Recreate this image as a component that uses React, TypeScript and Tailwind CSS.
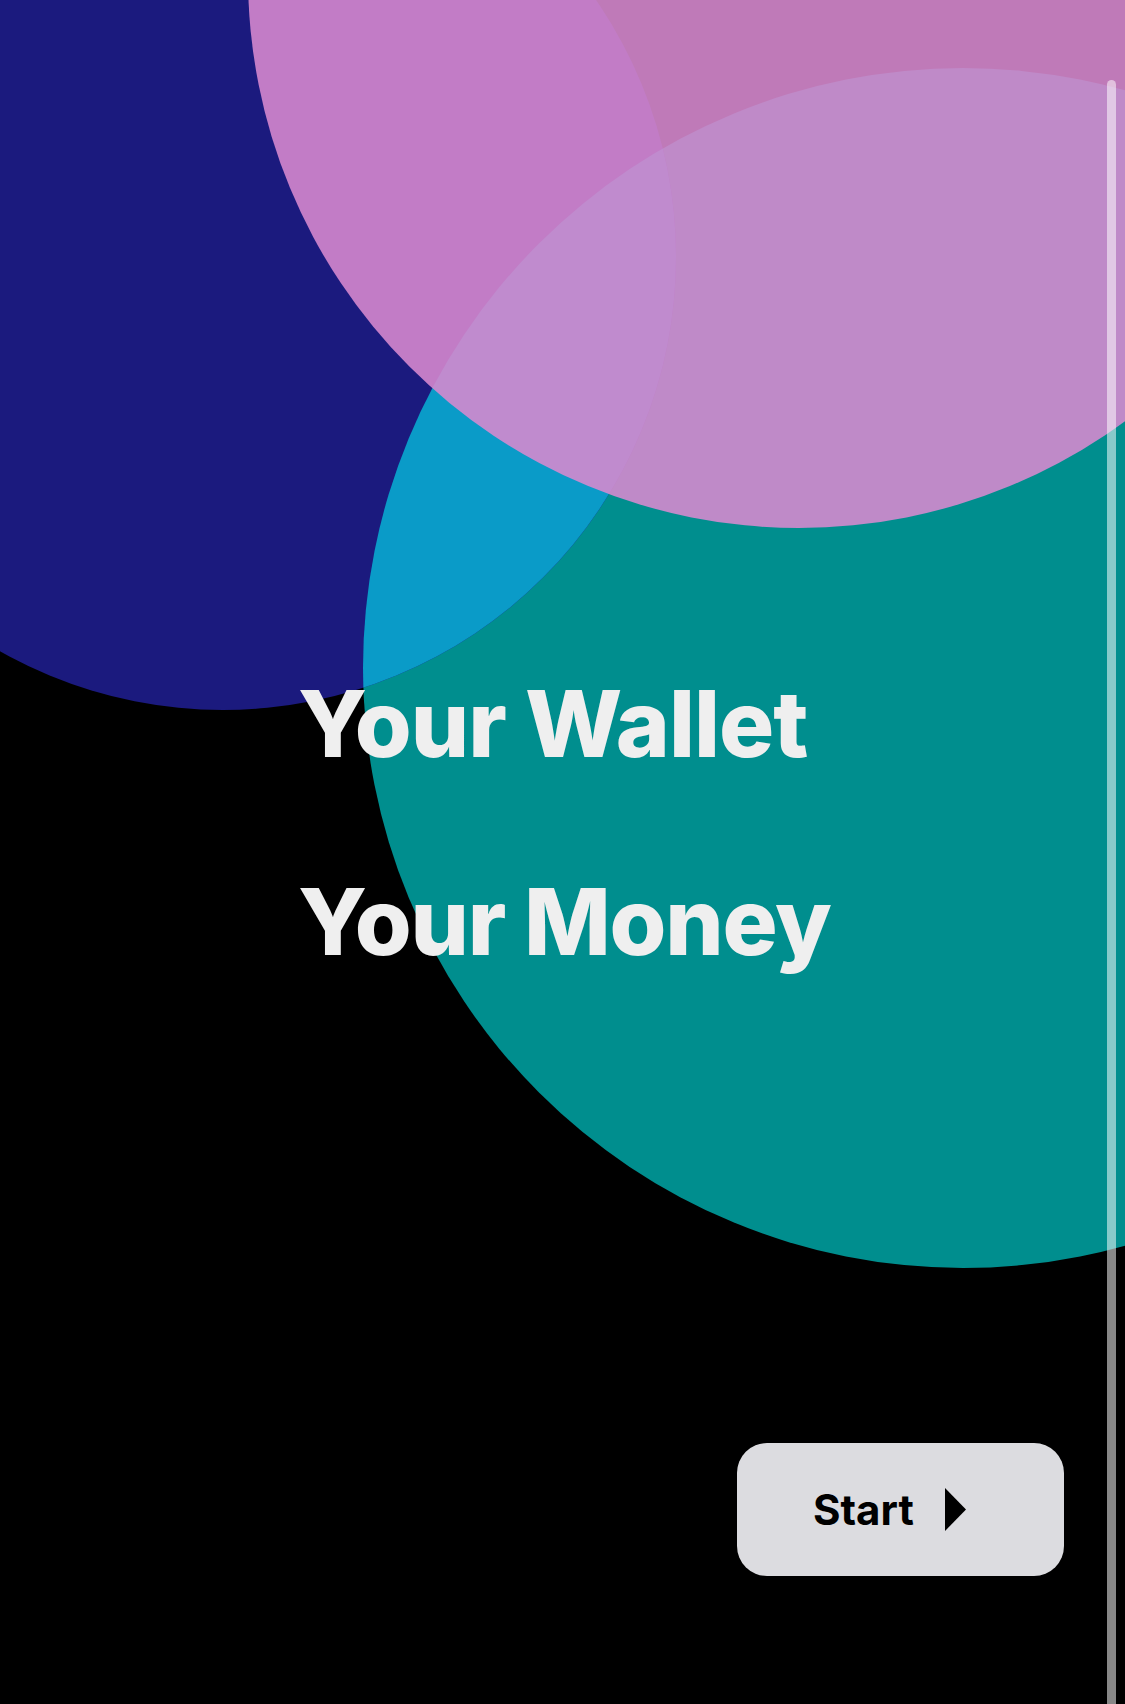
import React from "react";

export default function App() {
  return (
    <div
      className="relative w-[1125px] h-[1704px] overflow-hidden bg-black"
      style={{ fontFamily: "Inter, 'Noto Sans', sans-serif" }}
    >
      {/* decorative circles */}
      <div className="absolute left-[363px] top-[68px] h-[1200px] w-[1200px] rounded-full bg-[#008e8e]" />
      <div className="absolute left-[-230px] top-[-196px] h-[906px] w-[906px] overflow-hidden rounded-full bg-[#1b1a7e]">
        <div className="absolute left-[593px] top-[264px] h-[1200px] w-[1200px] rounded-full bg-[#0a9bc8]" />
      </div>
      <div className="absolute left-[248px] top-[-574px] h-[1102px] w-[1102px] rounded-full bg-[rgba(215,137,207,0.89)]" />

      {/* content */}
      <div className="relative z-10 flex flex-col pl-[298px] pt-[678px]">
        <h1 className="text-[92px] leading-none font-extrabold tracking-[-1px] text-[#efefef]">
          Your Wallet
        </h1>
        <h1 className="mt-[106px] text-[92px] leading-none font-extrabold tracking-[-1.2px] text-[#efefef]">
          Your Money
        </h1>
        <div className="mt-[475px] flex justify-end pr-[61px]">
          <button className="flex h-[133px] w-[327px] items-center rounded-[30px] bg-[#dcdce0] pl-[76px]">
            <span className="text-[42px] leading-none font-bold text-black">Start</span>
            <svg className="ml-[31px]" width="21" height="43" viewBox="0 0 21 43">
              <polygon points="0,0 21,21.5 0,43" fill="#000" />
            </svg>
          </button>
        </div>
      </div>

      {/* scrollbar overlay */}
      <div className="absolute right-[9px] top-[80px] bottom-0 w-[9px] rounded-t-full bg-[rgba(255,255,255,0.53)]" />
    </div>
  );
}
